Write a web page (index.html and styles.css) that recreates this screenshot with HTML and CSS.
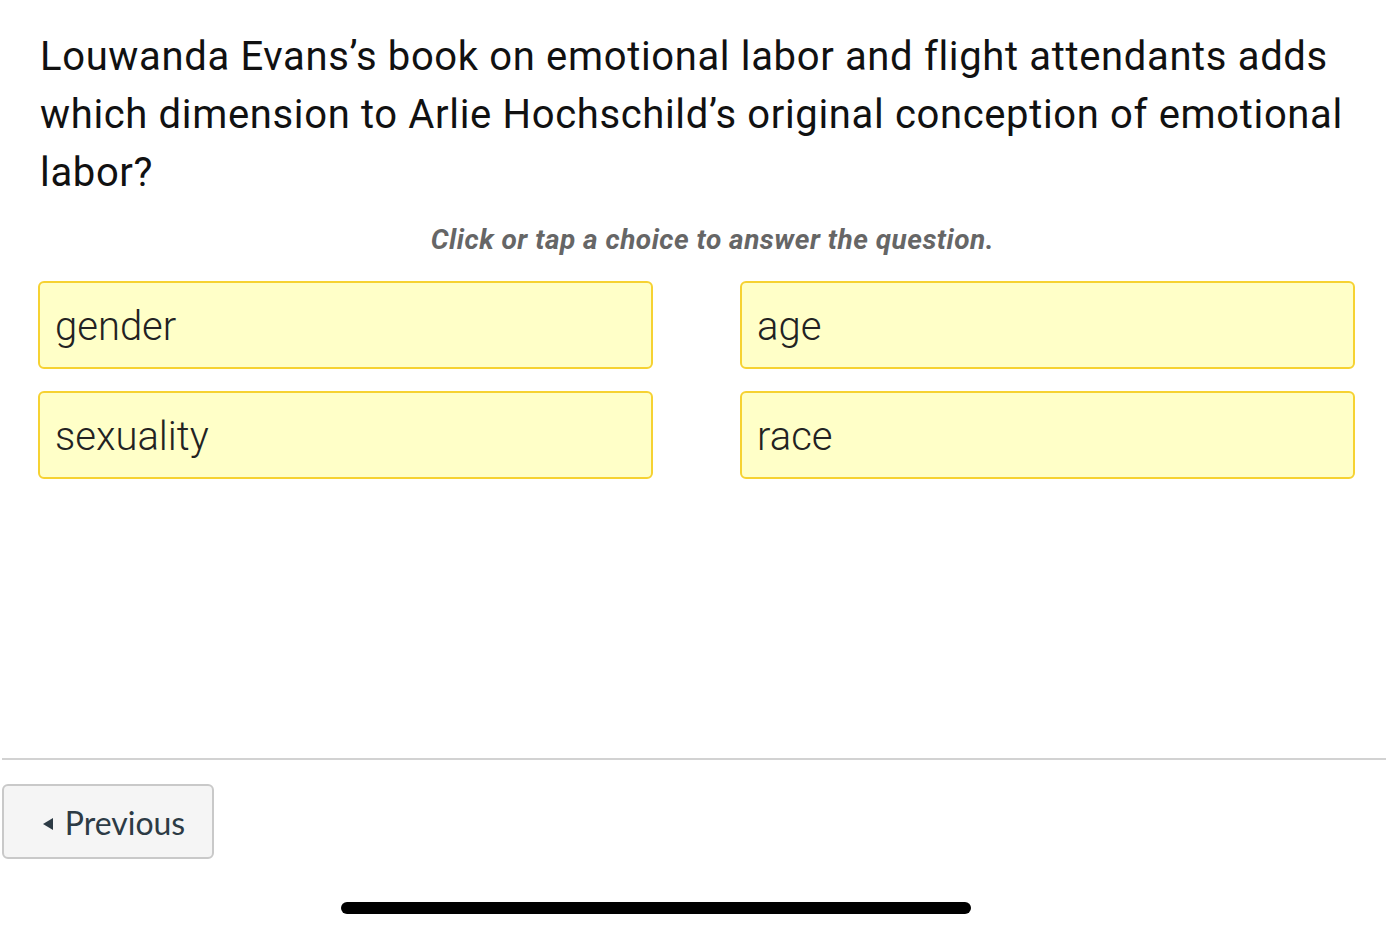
FILE: index.html
```html
<!DOCTYPE html>
<html lang="en">
<head>
<meta charset="utf-8">
<title>Question</title>
<link rel="stylesheet" href="styles.css">
</head>
<body>
<main class="page">
  <section class="quiz">
    <h1 class="question">Louwanda Evans’s book on emotional labor and flight attendants adds which dimension to Arlie Hochschild’s original conception of emotional labor?</h1>
    <p class="hint">Click or tap a choice to answer the question.</p>
    <div class="choices">
      <button class="choice">gender</button>
      <button class="choice">age</button>
      <button class="choice">sexuality</button>
      <button class="choice">race</button>
    </div>
  </section>
  <footer class="nav">
    <button class="prev"><span class="tri"></span>Previous</button>
  </footer>
  <div class="home-bar"></div>
</main>
</body>
</html>
```
FILE: styles.css
```css
html, body {
  margin: 0;
  padding: 0;
  background: #fff;
}
.page {
  width: 1386px;
  height: 928px;
  display: flex;
  flex-direction: column;
  font-family: Roboto, "Liberation Sans", sans-serif;
  color: #111;
}
.quiz {
  padding: 28px 31px 0 40px;
  height: 758px;
  box-sizing: border-box;
}
.question {
  margin: 0;
  font-weight: 400;
  font-size: 40px;
  line-height: 58px;
  letter-spacing: 0.65px;
  color: #111;
}
.hint {
  margin: 22px -30px 0 0;
  text-align: center;
  font-style: italic;
  font-weight: 700;
  font-size: 28px;
  line-height: 32px;
  color: #666;
  letter-spacing: 0.5px;
}
.choices {
  margin: 25px 0 0 -2px;
  display: grid;
  grid-template-columns: 615px 615px;
  column-gap: 87px;
  row-gap: 22px;
}
.choice {
  height: 88px;
  box-sizing: border-box;
  background: #ffffc8;
  border: 2px solid #f6d232;
  border-radius: 6px;
  text-align: left;
  padding: 3px 0 0 15px;
  font-family: Roboto, "Liberation Sans", sans-serif;
  font-weight: 300;
  font-size: 40px;
  color: #222;
}
.nav {
  border-top: 2px solid #d2d2d2;
  margin-left: 2px;
  padding-top: 24px;
  height: 120px;
  box-sizing: border-box;
}
.prev {
  width: 212px;
  height: 75px;
  box-sizing: border-box;
  background: #f5f5f5;
  border: 2px solid #c9c9c9;
  border-radius: 6px;
  font-family: Lato, sans-serif;
  font-size: 32px;
  color: #2d3b45;
  display: flex;
  align-items: center;
  justify-content: center;
  gap: 12px;
  padding: 2px 0 0 12px;
}
.tri {
  width: 0;
  height: 0;
  border-top: 6px solid transparent;
  border-bottom: 6px solid transparent;
  border-right: 10px solid #2d3b45;
  margin-top: 2px;
}
.home-bar {
  width: 630px;
  height: 12px;
  background: #000;
  border-radius: 6px;
  margin: 24px 0 0 341px;
}
```
